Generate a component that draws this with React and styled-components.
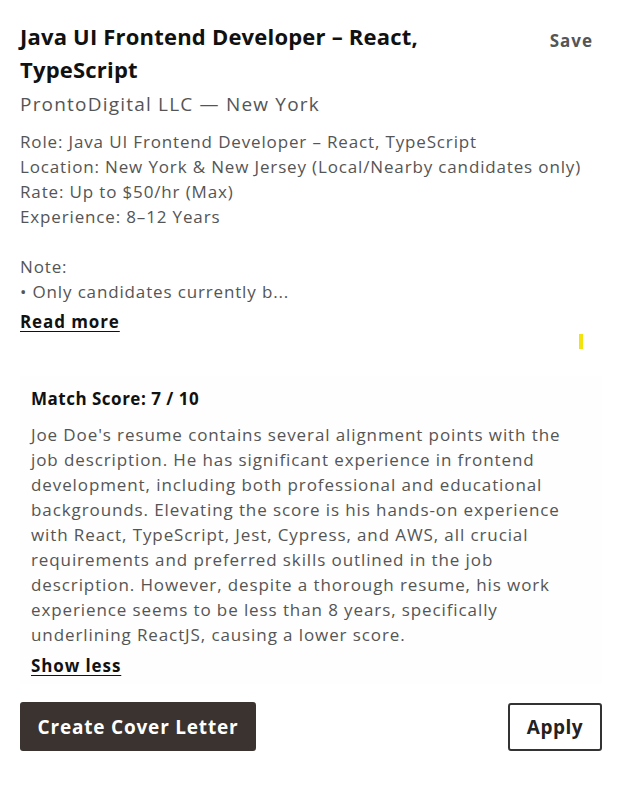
import React from "react";
import styled, { createGlobalStyle } from "styled-components";

const GlobalStyle = createGlobalStyle`
  html, body {
    margin: 0;
    padding: 0;
    background: #fff;
  }
  body {
    font-family: "Open Sans", "Liberation Sans", sans-serif;
    -webkit-font-smoothing: antialiased;
  }
`;

const details = [
  "Role: Java UI Frontend Developer – React, TypeScript",
  "Location: New York & New Jersey (Local/Nearby candidates only)",
  "Rate: Up to $50/hr (Max)",
  "Experience: 8–12 Years",
  "",
  "Note:",
  "• Only candidates currently b...",
];

const App = () => {
  return (
    <>
      <GlobalStyle />
      <Card>
        <Header>
          <Title>Java UI Frontend Developer – React, TypeScript</Title>
          <SaveButton>Save</SaveButton>
        </Header>
        <Company>ProntoDigital LLC — New York</Company>

        <Description>
          {details.map((line, i) => (
            <Line key={i}>{line || "\u00a0"}</Line>
          ))}
        </Description>
        <TextLink $gap={5}>Read more</TextLink>

        <MarkerRow>
          <Marker />
        </MarkerRow>

        <MatchBox>
          <MatchTitle>Match Score: 7 / 10</MatchTitle>
          <MatchText>
            Joe Doe's resume contains several alignment points with the job
            description. He has significant experience in frontend development,
            including both professional and educational backgrounds. Elevating
            the score is his hands-on experience with React, TypeScript, Jest,
            Cypress, and AWS, all crucial requirements and preferred skills
            outlined in the job description. However, despite a thorough
            resume, his work experience seems to be less than 8 years,
            specifically underlining ReactJS, causing a lower score.
          </MatchText>
          <TextLink $gap={6}>Show less</TextLink>
        </MatchBox>

        <Actions>
          <PrimaryButton>Create Cover Letter</PrimaryButton>
          <OutlineButton>Apply</OutlineButton>
        </Actions>
      </Card>
    </>
  );
};

const Card = styled.div`
  width: 621px;
  box-sizing: border-box;
  padding: 20px 19px 40px 20px;
`;

const Header = styled.div`
  display: flex;
  align-items: flex-start;
  justify-content: space-between;
`;

const Title = styled.h2`
  margin: 0;
  width: 430px;
  font-size: 22px;
  line-height: 33px;
  font-weight: 700;
  color: #111;
  letter-spacing: 0.2px;
`;

const SaveButton = styled.button`
  border: none;
  background: transparent;
  padding: 0;
  margin: 9px 9px 0 0;
  font-family: inherit;
  font-size: 17px;
  font-weight: 700;
  letter-spacing: 1px;
  color: #555;
  cursor: pointer;
`;

const Company = styled.div`
  margin-top: 5px;
  font-size: 19px;
  line-height: 26px;
  letter-spacing: 1.2px;
  color: #555;
`;

const Description = styled.div`
  margin-top: 12px;
  color: #555;
  font-size: 17px;
  line-height: 25px;
  letter-spacing: 0.85px;
`;

const Line = styled.div``;

const TextLink = styled.a`
  display: inline-block;
  margin-top: ${(p) => p.$gap}px;
  font-size: 17px;
  line-height: 25px;
  font-weight: 700;
  letter-spacing: 0.9px;
  color: #111;
  text-decoration: underline;
  text-underline-offset: 3px;
  cursor: pointer;
`;

const MarkerRow = styled.div`
  display: flex;
  justify-content: flex-end;
  padding-right: 19px;
  height: 15px;
  align-items: flex-end;
`;

const Marker = styled.span`
  width: 4px;
  height: 15px;
  background: #f3e30d;
`;

const MatchBox = styled.div`
  margin-top: 27px;
  padding: 10px 11px 6px;
  background: #fefefe;
`;

const MatchTitle = styled.div`
  font-size: 17px;
  line-height: 26px;
  font-weight: 700;
  letter-spacing: 0.5px;
  color: #111;
`;

const MatchText = styled.p`
  margin: 10px 0 0;
  width: 534px;
  font-size: 17px;
  line-height: 25px;
  letter-spacing: 0.9px;
  color: #555;
`;

const Actions = styled.div`
  margin-top: 18px;
  display: flex;
  justify-content: space-between;
  align-items: center;
`;

const PrimaryButton = styled.button`
  height: 49px;
  width: 236px;
  border: none;
  border-radius: 3px;
  background: #3a3330;
  color: #fff;
  font-family: inherit;
  font-size: 19px;
  font-weight: 700;
  letter-spacing: 0.8px;
  cursor: pointer;
`;

const OutlineButton = styled.button`
  height: 48px;
  width: 94px;
  box-sizing: border-box;
  border: 2px solid #333;
  border-radius: 3px;
  background: #fff;
  color: #222;
  font-family: inherit;
  font-size: 19px;
  font-weight: 700;
  letter-spacing: 0.5px;
  cursor: pointer;
`;

export default App;
